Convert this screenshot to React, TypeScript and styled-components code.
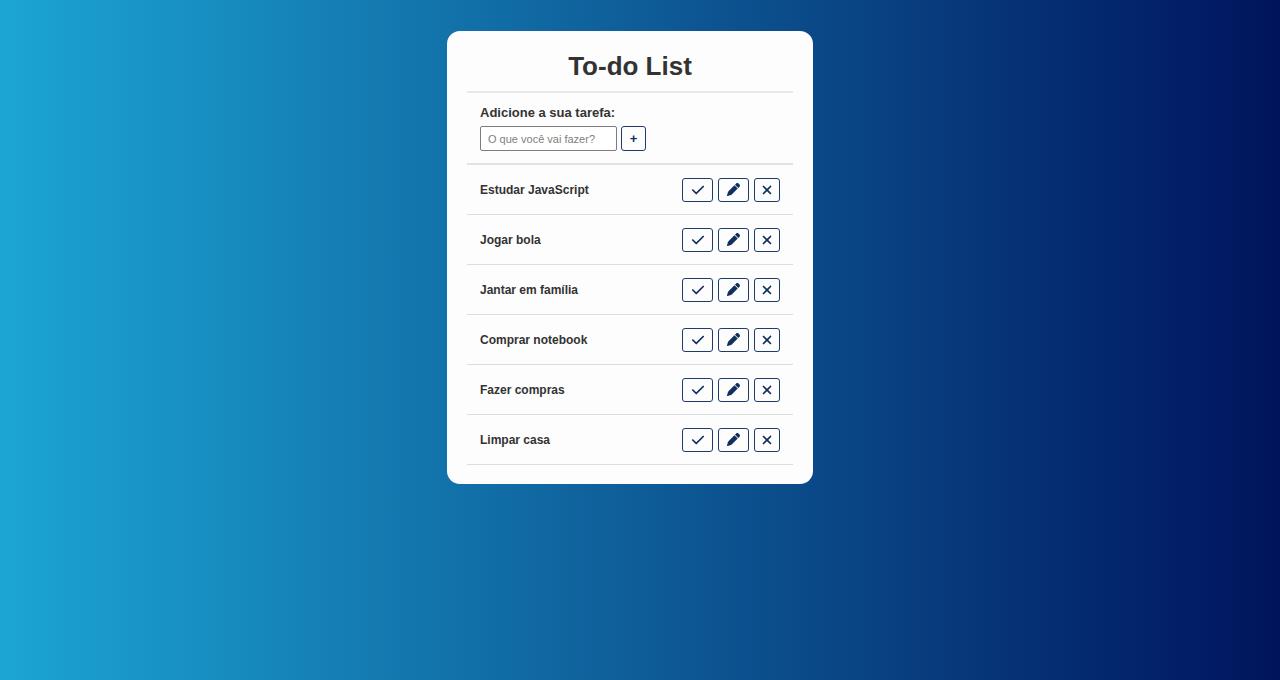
import React, { useState } from "react";
import styled, { createGlobalStyle } from "styled-components";
import { FaCheck, FaPen, FaXmark } from "react-icons/fa6";

const GlobalStyle = createGlobalStyle`
  * {
    box-sizing: border-box;
    margin: 0;
    padding: 0;
    font-family: "Liberation Sans", Arial, Helvetica, sans-serif;
  }

  body {
    color: #333;
  }
`;

const Page = styled.div`
  min-height: 100vh;
  padding: 31px 20px 31px 0;
  background: linear-gradient(to right, #1ca5d4, #00145c);
`;

const Card = styled.main`
  width: 90%;
  max-width: 366px;
  margin: 0 auto;
  padding: 20px 20px 19px;
  border-radius: 13px;
  background: #fdfdfd;
`;

const Header = styled.header`
  padding-bottom: 10px;
  border-bottom: 2px solid #e7e7e9;
  text-align: center;
`;

const Title = styled.h1`
  font-size: 26px;
  line-height: 30px;
`;

const TaskForm = styled.form`
  padding: 12px 13px;
  border-bottom: 2px solid #e2e2e5;
`;

const Label = styled.label`
  display: block;
  margin-bottom: 5px;
  font-size: 13px;
  font-weight: bold;
  line-height: 16px;
`;

const Field = styled.div`
  display: flex;
  gap: 4px;
`;

const TaskInput = styled.input`
  width: 137px;
  height: 25px;
  padding: 0 7px;
  border: 1px solid #7d7d7d;
  border-radius: 2px;
  background: #fff;
  color: #333;
  font-size: 11px;

  &::placeholder {
    color: #808080;
  }
`;

const Button = styled.button<{ $width: number; $height: number }>`
  display: flex;
  align-items: center;
  justify-content: center;
  width: ${(p) => p.$width}px;
  height: ${(p) => p.$height}px;
  border: 1px solid #1f3b6b;
  border-radius: 3px;
  background: #fdfdfd;
  color: #102f5e;
  font-size: 13px;
  font-weight: bold;
  cursor: pointer;
`;

const List = styled.ul`
  list-style: none;
`;

const Row = styled.li`
  display: flex;
  align-items: center;
  justify-content: space-between;
  min-height: 50px;
  padding: 0 13px;
  border-bottom: 1px solid #dddde0;
`;

const TaskName = styled.h3`
  font-size: 12px;
  line-height: 16px;
`;

const Actions = styled.div`
  display: flex;
  gap: 5px;
`;

const initialTasks = [
  "Estudar JavaScript",
  "Jogar bola",
  "Jantar em família",
  "Comprar notebook",
  "Fazer compras",
  "Limpar casa",
];

export default function App() {
  const [tasks, setTasks] = useState(initialTasks);
  const [text, setText] = useState("");

  const addTask = (event: React.FormEvent) => {
    event.preventDefault();
    if (!text.trim()) return;
    setTasks([...tasks, text.trim()]);
    setText("");
  };

  return (
    <Page>
      <GlobalStyle />
      <Card>
        <Header>
          <Title>To-do List</Title>
        </Header>
        <TaskForm onSubmit={addTask}>
          <Label htmlFor="task">Adicione a sua tarefa:</Label>
          <Field>
            <TaskInput
              id="task"
              type="text"
              placeholder="O que você vai fazer?"
              value={text}
              onChange={(e) => setText(e.target.value)}
            />
            <Button type="submit" $width={25} $height={25}>
              +
            </Button>
          </Field>
        </TaskForm>
        <List>
          {tasks.map((task, index) => (
            <Row key={index}>
              <TaskName>{task}</TaskName>
              <Actions>
                <Button type="button" $width={31} $height={24} aria-label="Concluir">
                  <FaCheck size={14} />
                </Button>
                <Button type="button" $width={31} $height={24} aria-label="Editar">
                  <FaPen size={13} />
                </Button>
                <Button
                  type="button"
                  $width={26}
                  $height={24}
                  aria-label="Remover"
                  onClick={() => setTasks(tasks.filter((_, i) => i !== index))}
                >
                  <FaXmark size={14} />
                </Button>
              </Actions>
            </Row>
          ))}
        </List>
      </Card>
    </Page>
  );
}
